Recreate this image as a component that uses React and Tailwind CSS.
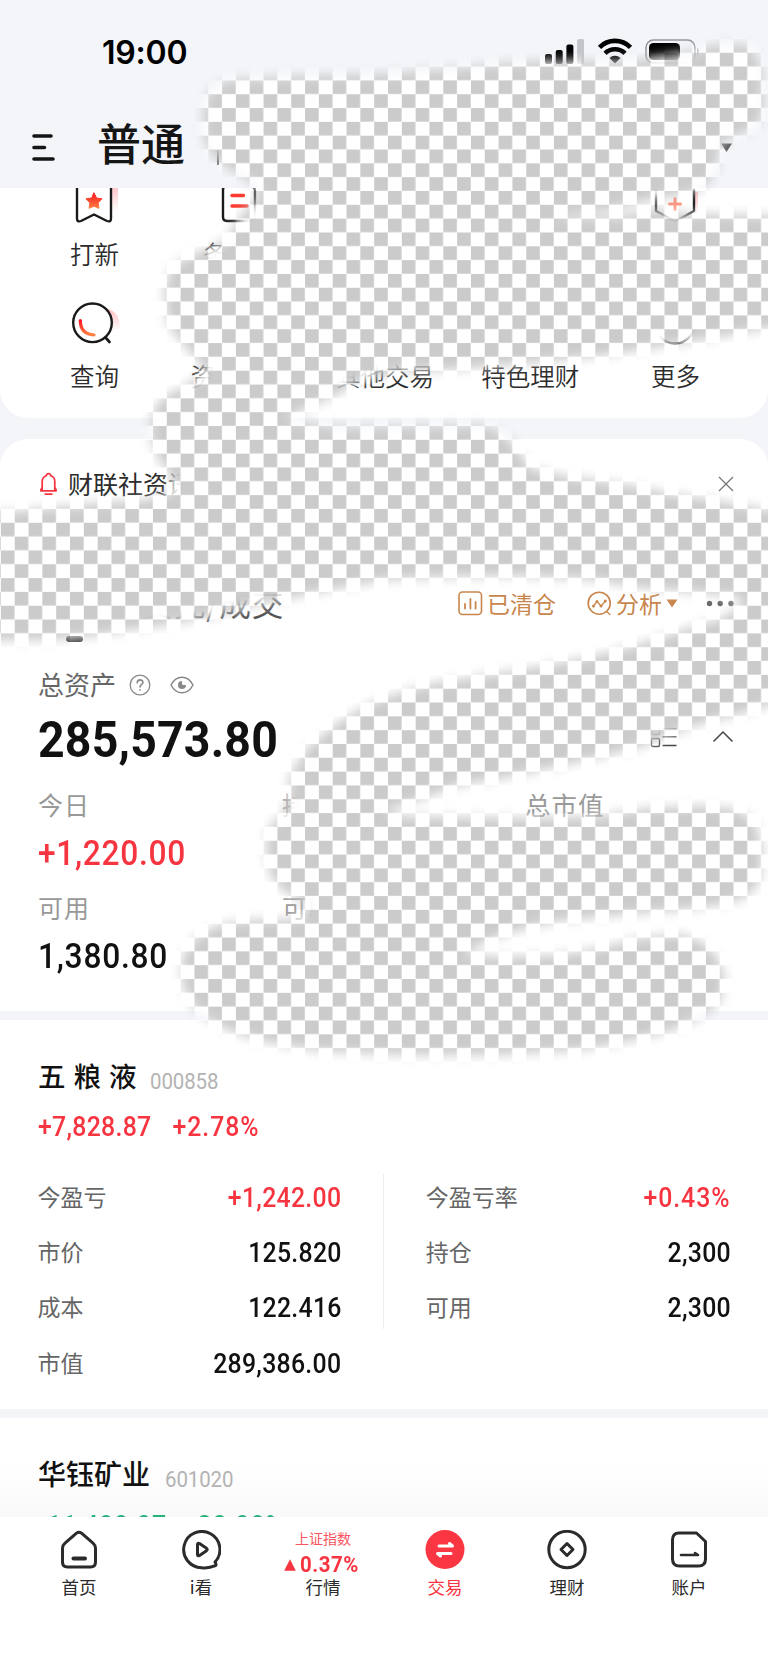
const shortcuts = [
    { label: '打新', icon: 'bookmark' },
    { label: '条件单', icon: 'doc' },
    { label: '', icon: '' },
    { label: '', icon: 'box' },
    { label: '', icon: 'hex' },
    { label: '查询', icon: 'search' },
    { label: '资产分析', icon: '' },
    { label: '其他交易', icon: '' },
    { label: '特色理财', icon: '' },
    { label: '更多', icon: 'more' },
];

const leftRows = [
    { label: '今盈亏', value: '+1,242.00', up: true },
    { label: '市价', value: '125.820' },
    { label: '成本', value: '122.416' },
    { label: '市值', value: '289,386.00' },
];

const rightRows = [
    { label: '今盈亏率', value: '+0.43%', up: true },
    { label: '持仓', value: '2,300' },
    { label: '可用', value: '2,300' },
];

const tabs = [
    { label: '首页', icon: 'home' },
    { label: 'i看', icon: 'play' },
    { label: '行情', icon: 'index' },
    { label: '交易', icon: 'trade', active: true },
    { label: '理财', icon: 'coin' },
    { label: '账户', icon: 'account' },
];

// outline of the erased area, in page pixels
const ERASED =
    'M203 130 L204 105 L210 90 L228 80 L300 76 L384 74 L450 69 L500 64 L545 61 L600 62 L640 60 L690 52 L720 44 L752 46 L762 70 L764 108 L758 126 L740 134 L720 143 L716 170 L704 188 L690 194 L655 199 L610 210 L560 216 L560 219 L620 216 L655 209 L690 214 L780 216 L780 326 L730 335 L690 342 L640 350 L600 356 L520 364 L450 370 L400 371 L360 382 L330 398 L290 416 L290 421 L340 427 L400 426 L480 425 L502 432 L516 447 L530 468 L560 475 L600 481 L640 487 L670 494 L700 498 L780 512 L780 702 L740 714 L700 724 L670 735 L640 747 L600 757 L560 766 L510 777 L460 785 L430 796 L400 806 L384 812 L400 816 L450 817 L540 818 L600 816 L650 808 L700 806 L735 809 L755 820 L763 850 L760 882 L745 898 L720 905 L680 910 L620 915 L560 921 L520 930 L490 940 L462 954 L500 957 L560 955 L600 948 L640 938 L680 934 L702 942 L718 957 L725 980 L720 1002 L700 1018 L670 1031 L630 1041 L580 1050 L500 1055 L400 1055 L320 1051 L260 1041 L220 1027 L195 1010 L182 985 L182 957 L195 938 L215 926 L250 920 L285 920 L306 916 L304 902 L282 890 L270 875 L266 850 L268 828 L285 812 L289 792 L290 775 L308 747 L335 725 L360 709 L384 698 L430 684 L500 673 L560 663 L620 650 L660 638 L690 628 L720 619 L742 606 L740 597 L690 592 L640 588 L595 580 L520 576 L450 577 L384 580 L340 588 L300 596 L250 606 L214 616 L160 626 L130 630 L100 635 L50 640 L-12 640 L-12 514 L60 507 L100 503 L145 500 L172 492 L170 474 L158 458 L150 435 L153 410 L165 396 L188 385 L206 370 L184 345 L168 325 L164 290 L172 266 L194 254 L224 242 L240 217 L260 194 L252 182 L222 165 L208 150 Z';

const CJK = "font-['Noto_Sans_CJK_SC',sans-serif]";

function ShortcutIcon({ name }) {
    return (
        <svg width="56" height="48" viewBox="0 0 56 48" fill="none" stroke="#1a1a1a" strokeWidth="2.400" strokeLinecap="round" strokeLinejoin="round">
            <defs>
                <linearGradient id="hot" x1="0" y1="0" x2="0" y2="1">
                    <stop offset="0" stopColor="#fb1420" />
                    <stop offset="1" stopColor="#ff8040" />
                </linearGradient>
                <linearGradient id="glow" x1="0" y1="0" x2="0" y2="1">
                    <stop offset="0" stopColor="#ff8a90" stopOpacity="0.55" />
                    <stop offset="1" stopColor="#ff8a90" stopOpacity="0" />
                </linearGradient>
            </defs>
            {name === 'bookmark' && (
                <g transform="translate(-1 0)">
                    <path d="M40 4h8a4 4 0 0 1 4 4v24H45z" fill="url(#glow)" stroke="none" />
                    <path d="M11 4h34v34.500q0 4-4 2.500L28 34.500 15 41q-4 1.500-4-2.500z" fill="#fff" />
                    <path d="m28 13 2.600 5 5.400.8-3.900 4 .9 5.500L28 26.300l-5 2 .9-5.500-3.900-4 5.400-.8z" fill="url(#hot)" stroke="url(#hot)" strokeWidth="1" />
                </g>
            )}
            {name === 'doc' && (
                <>
                    <path d="M11 7v30q0 4 4 4h24q4 0 4-4V11q0-4-4-5H15q-4 0-4 4z" />
                    <path d="M20 15.500h11.500M20 26h15" stroke="#fb3a30" strokeWidth="3.400" />
                </>
            )}
            {name === 'box' && <path d="m10 34 16 6 16-6" />}
            {name === 'hex' && (
                <>
                    <path d="M44 12h7v20l-6 4z" fill="url(#glow)" stroke="none" />
                    <path d="M9 10v21l19 10.500L47 31V10" fill="#fff" />
                    <path d="M28 18.500v11M22.500 24h11" stroke="#ff8a70" strokeWidth="3" />
                </>
            )}
            {name === 'search' && (
                <g transform="translate(-1 -4)">
                    <path d="M34 10q20 0 20 20l-8 4z" fill="url(#glow)" stroke="none" />
                    <circle cx="26.500" cy="24.800" r="19.300" fill="#fff" />
                    <path d="m39.500 39.500 4 4.500" strokeWidth="2.700" />
                    <path d="M14.300 22.500q0 13.500 13.700 14.500" stroke="url(#hot)" strokeWidth="3.200" />
                </g>
            )}
            {name === 'more' && <circle cx="28" cy="22.500" r="19" />}
        </svg>
    );
}

function TabIcon({ name }) {
    if (name === 'index') {
        return (
            <div className="flex h-[51px] flex-col items-center">
                <span className={`-mt-[1px] text-[14px] leading-[18px] text-[#f9555e] ${CJK}`}>上证指数</span>
                <div className="-ml-[3px] mt-[7px] flex items-center gap-[4px]">
                    <svg width="12" height="12" viewBox="0 0 12 12">
                        <path d="M6 0.300 11.800 11.700H0.200z" fill="#f73541" />
                    </svg>
                    <span className="-mr-[3px] inline-block origin-left scale-x-[0.95] font-[Roboto] text-[21.500px] font-bold leading-[22px] tracking-[0.600px] text-[#f73541]">0.37%</span>
                </div>
            </div>
        );
    }
    return (
        <svg className="mb-[11px]" width="40" height="40" viewBox="0 0 40 40" fill="none" stroke="#2b2b2b" strokeWidth="3" strokeLinecap="round" strokeLinejoin="round">
            {name === 'home' && (
                <>
                    <path d="M17.500 3.200q2.500-2 5 0l11.500 10q2.500 2.200 2.500 5V32q0 5-5 5h-23q-5 0-5-5V18.200q0-2.800 2.500-5z" />
                    <path d="M14.500 28.500h11.500" strokeWidth="4" />
                </>
            )}
            {name === 'play' && (
                <>
                    <path d="M34 32A18.100 18.100 0 1 0 20.500 37.700q7 .8 14-2 1.200-1-.5-3.700z" />
                    <path d="M16.500 14.500v10q0 2 2 .9l7-4.700q1.400-1.200 0-2.400l-7-4.700q-2-1.100-2 .9z" />
                </>
            )}
            {name === 'trade' && (
                <>
                    <circle cx="20" cy="19.500" r="19.500" fill="#f93641" stroke="none" />
                    <path d="M14 16h13.500l-3-2.500M26 23.500H12.500l3 2.500" stroke="#fff" />
                </>
            )}
            {name === 'coin' && (
                <>
                    <circle cx="20" cy="19.500" r="18.200" />
                    <path d="m20 13.500 6 6-6 6-6-6z" />
                </>
            )}
            {name === 'account' && (
                <>
                    <path d="M10 3h17.500l9 8.500V29q0 7-7 7H10.500q-7 0-7-7V10q0-7 6.500-7z" />
                    <path d="M12 25h17l-3-2" strokeWidth="2.600" />
                </>
            )}
        </svg>
    );
}

function StatusBar() {
    return (
        <div className="flex h-[104px] items-start justify-between pl-[102px] pr-[67px] pt-[33px]">
            <span className="font-[Inter] text-[32px] font-semibold leading-[40px] tracking-[-0.200px] text-black">19:00</span>
            <div className="flex items-start pt-[5px]">
                <svg width="40" height="28" viewBox="0 0 40 28">
                    <rect x="1" y="16" width="7" height="10" rx="2" />
                    <rect x="11.700" y="12" width="7" height="14" rx="2" />
                    <rect x="22.400" y="6.500" width="7" height="19.500" rx="2" />
                    <rect x="33.100" y="1" width="7" height="25" rx="2" fill="#c4c5c9" />
                </svg>
                <svg className="ml-[13px]" width="36" height="28" viewBox="0 0 36 28" fill="none" stroke="#000" strokeWidth="4.600">
                    <path d="M2.500 9.300a22 22 0 0 1 31 0" />
                    <path d="M8 15.300a14.500 14.500 0 0 1 20 0" />
                    <path d="M12.500 20a8 8 0 0 1 11 0L18 25.500z" fill="#000" stroke="none" />
                </svg>
                <svg className="ml-[11px]" width="57" height="28" viewBox="0 0 57 28">
                    <rect x="2" y="2" width="49" height="23" rx="7.500" fill="none" stroke="#95969a" strokeWidth="1.600" />
                    <rect x="5" y="5" width="31" height="17" rx="4.500" />
                    <path d="M53 9.500q4 4 0 8z" fill="#95969a" />
                </svg>
            </div>
        </div>
    );
}

function Header() {
    return (
        <div className="h-[188px] bg-[#f3f5f9]">
            <StatusBar />
            <div className="flex h-[84px] items-start pl-[31px] pr-[35px]">
                <svg className="mt-[28px]" width="26" height="32" viewBox="0 0 26 32" stroke="#151515" strokeWidth="3.600" strokeLinecap="round">
                    <path d="M3 4h17M3 15.500h10.500M3 27h19" />
                </svg>
                <span className={`ml-[40px] mt-[6px] text-[44px] font-medium leading-[64px] text-[#151515] ${CJK}`}>普通</span>
                <span className="ml-[32px] mt-[46px] h-[15px] w-[2px] bg-[#555]" />
                <svg className="ml-auto mt-[39px]" width="13" height="10" viewBox="0 0 13 10">
                    <path d="M1 0.500h11L6.500 9z" fill="#555" />
                </svg>
            </div>
        </div>
    );
}

function Shortcuts() {
    return (
        <div className="h-[230px] overflow-hidden rounded-b-[28px] bg-white pl-[22px] pr-[20px]">
            <div className="-mt-[8px] grid grid-cols-5">
                {shortcuts.map((item, i) => (
                    <div key={i} className="flex h-[122px] flex-col items-center">
                        <ShortcutIcon name={item.icon} />
                        <span className={`mt-[8px] h-[36px] text-[24.500px] font-[350] leading-[36px] text-[#2c2c2c] ${CJK}`}>{item.label}</span>
                    </div>
                ))}
            </div>
        </div>
    );
}

function NewsBar() {
    return (
        <div className="mt-[21px] flex h-[92px] items-center rounded-[28px] bg-white pb-[3px] pl-[39px] pr-[34px]">
            <svg className="mt-[1px]" width="19" height="24" viewBox="0 0 19 24" fill="none" stroke="#f73541" strokeWidth="1.700" strokeLinejoin="round">
                <path d="M1.200 18.800h16.600M3.200 18.500V9.500Q3.200 5.200 7.200 3.800q.3-2.200 2.300-2.200t2.300 2.200q4 1.400 4 5.700v9M1.500 18.500l1.700-3M17.500 18.500l-1.700-3M5.500 22.200h8" />
            </svg>
            <span className={`-mt-[2px] ml-[10px] text-[25px] leading-[36px] text-[#2c2c2c] ${CJK}`}>财联社资讯</span>
            <svg className="ml-auto" width="16" height="16" viewBox="0 0 16 16" stroke="#777" strokeWidth="1.300">
                <path d="M1 1l14 14M15 1 1 15" />
            </svg>
        </div>
    );
}

function Assets() {
    return (
        <div className="mt-[16px] flex h-[464px] flex-col rounded-t-[28px] bg-white px-[38px]">
            <div className="flex h-[94px] items-start pt-[34px]">
                <div className="ml-[28px] mt-[55px] h-[6px] w-[17px] rounded-full bg-[#2f2f2f]" />
                <span className={`ml-[58px] text-[32px] leading-[42px] tracking-[0.500px] text-[#555] ${CJK}`}>委托/成交</span>
                <div className="ml-auto mt-[5px] flex items-center text-[#c8864c]">
                    <svg width="25" height="25" viewBox="0 0 25 25" fill="none" stroke="currentColor" strokeWidth="1.600" strokeLinecap="round">
                        <rect x="1" y="1" width="22.500" height="22.500" rx="3.500" />
                        <path d="M7 13v4.500M12.400 8v9.500M17.600 11v6.500" strokeWidth="1.800" />
                    </svg>
                    <span className={`ml-[4px] text-[23px] leading-[34px] ${CJK}`}>已清仓</span>
                    <svg className="ml-[31px]" width="25" height="25" viewBox="0 0 25 25" fill="none" stroke="currentColor" strokeWidth="1.600" strokeLinecap="round">
                        <circle cx="12.200" cy="12.200" r="11" />
                        <path d="m19.500 20.500 3.500 3M6.500 15l3.500-4.500 4 4.500 4.500-5" strokeWidth="1.300" />
                        <path d="M6.500 14.900v.1M10 10.500v.1M14 14.900v.1M18.300 10v.1" strokeWidth="3" />
                    </svg>
                    <span className={`ml-[4px] text-[23px] leading-[34px] ${CJK}`}>分析</span>
                    <svg className="ml-[4px]" width="12" height="9" viewBox="0 0 12 9">
                        <path d="M0.500 0.500h11L6 8.500z" fill="currentColor" />
                    </svg>
                    <svg className="-mr-[5px] ml-[28px]" width="29" height="7" viewBox="0 0 29 7" fill="#666">
                        <circle cx="3.500" cy="3.500" r="2.700" />
                        <circle cx="14.200" cy="3.500" r="2.700" />
                        <circle cx="25" cy="3.500" r="2.700" />
                    </svg>
                </div>
            </div>
            <div className="mt-[24px] flex h-[38px] items-center">
                <span className={`text-[26px] leading-[38px] text-[#666] ${CJK}`}>总资产</span>
                <svg className="ml-[13px] mt-[1px]" width="22" height="22" viewBox="0 0 22 22" fill="none" stroke="#888" strokeWidth="1.300" strokeLinecap="round">
                    <circle cx="11" cy="11" r="9.800" />
                    <path d="M8.200 8.800q.2-2.900 2.900-2.900 2.700.1 2.800 2.500 0 1.300-1.500 2.300-1.300.9-1.300 2.300M11.100 15.700v.4" strokeWidth="1.600" />
                </svg>
                <svg className="ml-[19px] mt-[2px]" width="24" height="18" viewBox="0 0 24 18" fill="none" stroke="#888" strokeWidth="1.500">
                    <path d="M1 9q4-7.800 11-7.800T23 9q-4 7.800-11 7.800T1 9z" />
                    <path d="M12 5a4 4 0 1 0 4 4h-3a1.300 1.300 0 0 1-1-1.500z" fill="#888" stroke="none" />
                </svg>
            </div>
            <div className="flex h-[64px] items-center">
                <span className="mt-[10px] inline-block origin-left scale-x-[0.92] font-[Roboto] text-[50.500px] font-bold leading-[64px] tracking-[0.200px] text-[#111]">285,573.80</span>
                <svg className="ml-auto mt-[3px]" width="28" height="22" viewBox="0 0 28 22" fill="none" stroke="#444" strokeWidth="1.400">
                    <rect x="1.500" y="1.500" width="8" height="7" rx="1.500" />
                    <rect x="1.500" y="12.500" width="8" height="8" rx="1.500" />
                    <path d="M12.500 2.500h14M12.500 10.800h14M12.500 19.500h14" />
                </svg>
                <svg className="-mr-[4px] ml-[34px] mt-[2px]" width="22" height="13" viewBox="0 0 22 13" fill="none" stroke="#444" strokeWidth="1.500">
                    <path d="M1.500 11.500 11 2l9.500 9.500" />
                </svg>
            </div>
            <div className="mt-[13px] grid grid-cols-[244px_243px_1fr]">
                <div className="flex flex-col items-start">
                    <span className={`h-[49px] text-[25px] leading-[48px] tracking-[1px] text-[#999] ${CJK}`}>今日</span>
                    <span className="inline-block h-[54px] origin-left scale-x-[0.92] font-[Roboto] text-[34.500px] font-medium leading-[48px] tracking-[0.750px] text-[#f73541]">+1,220.00</span>
                    <span className={`h-[49px] text-[25px] leading-[48px] tracking-[1px] text-[#999] ${CJK}`}>可用</span>
                    <span className="inline-block h-[48px] origin-left scale-x-[0.92] font-[Roboto] text-[34.500px] font-medium leading-[48px] tracking-[0.800px] text-[#111]">1,380.80</span>
                </div>
                <div className="flex flex-col">
                    <span className={`h-[103px] text-[25px] leading-[48px] tracking-[1px] text-[#999] ${CJK}`}>持仓盈亏</span>
                    <span className={`h-[48px] text-[25px] leading-[48px] tracking-[1px] text-[#999] ${CJK}`}>可取</span>
                </div>
                <span className={`text-[25.500px] leading-[48px] tracking-[1px] text-[#999] ${CJK}`}>总市值</span>
            </div>
        </div>
    );
}

function Row({ label, value, up }) {
    return (
        <div className="flex h-[55.400px] items-center justify-between">
            <span className={`-ml-[0.500px] -mt-[1px] text-[23px] leading-[34px] text-[#666] ${CJK}`}>{label}</span>
            <span className={`-mr-[0.600px] mt-[3px] inline-block origin-right scale-x-[0.92] font-[Roboto] text-[27px] font-medium leading-[34px] ${value.endsWith('%') ? 'tracking-[1px]' : 'tracking-[0.300px]'} ${up ? 'text-[#f73541]' : 'text-[#111]'}`}>{value}</span>
        </div>
    );
}

function Holding() {
    return (
        <div className="mt-[9px] h-[389px] bg-white px-[38px] pt-[34px]">
            <div className="-mt-[1px] flex h-[44px] items-baseline">
                <span className={`text-[27.500px] font-medium leading-[44px] [word-spacing:1.800px] text-[#111] ${CJK}`}>五 粮 液</span>
                <span className="ml-[14px] inline-block origin-left translate-y-[2px] scale-x-[0.93] font-[Roboto] text-[22px] leading-[44px] tracking-[-0.100px] text-[#b3b3b3]">000858</span>
            </div>
            <div className="mt-[13px] flex h-[34px] origin-left scale-x-[0.92] gap-[23px] font-[Roboto] text-[27px] font-medium leading-[34px] tracking-[0.300px] text-[#f73541]">
                <span>+7,828.87</span>
                <span className="tracking-[1px]">+2.78%</span>
            </div>
            <div className="mt-[24.500px] flex">
                <div className="w-[303px]">
                    {leftRows.map((row) => (
                        <Row key={row.label} {...row} />
                    ))}
                </div>
                <div className="ml-[42px] mt-[5px] h-[155px] w-[1.500px] bg-[#eeeeef]" />
                <div className="ml-[42px] w-[304px]">
                    {rightRows.map((row) => (
                        <Row key={row.label} {...row} />
                    ))}
                </div>
            </div>
        </div>
    );
}

function NextHolding() {
    return (
        <div className="mt-[9px] h-[99px] overflow-hidden bg-gradient-to-b from-white from-45% to-[#f9f9f9] px-[38px] pt-[33px]">
            <div className="flex h-[44px] items-baseline">
                <span className={`text-[28px] font-medium leading-[44px] text-[#111] ${CJK}`}>华钰矿业</span>
                <span className="ml-[15px] inline-block origin-left translate-y-[2px] scale-x-[0.93] font-[Roboto] text-[22px] leading-[44px] tracking-[-0.100px] text-[#b3b3b3]">601020</span>
            </div>
            <div className="mt-[14px] flex h-[34px] origin-left scale-x-[0.92] gap-[23px] whitespace-nowrap font-[Roboto] text-[27px] font-medium leading-[34px] tracking-[1px] text-[#26b07a]">
                <span>-11,488.07</span>
                <span>-20.88%</span>
            </div>
        </div>
    );
}

function TabBar() {
    return (
        <div className="grid h-[148px] grid-cols-6 bg-white px-[18px] pt-[13px]">
            {tabs.map((tab) => (
                <div key={tab.label} className="flex flex-col items-center">
                    <TabIcon name={tab.icon} />
                    <span className={`-mt-[7px] text-[17.500px] leading-[26px] ${tab.active ? 'text-[#f73541]' : 'text-[#2b2b2b]'} ${CJK}`}>{tab.label}</span>
                </div>
            ))}
        </div>
    );
}

function EraseOverlay() {
    return (
        <svg className="pointer-events-none absolute left-0 top-0" width="768" height="1665" viewBox="0 0 768 1665">
            <defs>
                <pattern id="checker" x="0.9" y="25.1" width="27.65" height="27.65" patternUnits="userSpaceOnUse">
                    <rect width="27.65" height="27.65" fill="#fff" />
                    <rect width="13.6" height="13.6" fill="#cbcbcb" />
                    <rect x="13.825" y="13.825" width="13.6" height="13.6" fill="#cbcbcb" />
                </pattern>
                <filter id="soft" x="-40" y="0" width="860" height="1120" filterUnits="userSpaceOnUse">
                    <feGaussianBlur stdDeviation="6" />
                </filter>
                <mask id="brush" x="0" y="0" width="768" height="1665" maskUnits="userSpaceOnUse">
                    <path d={ERASED} fill="#fff" filter="url(#soft)" />
                </mask>
            </defs>
            <rect width="768" height="1100" fill="url(#checker)" mask="url(#brush)" />
        </svg>
    );
}

function App() {
    return (
        <div className="relative h-[1665px] w-[768px] overflow-hidden bg-[#f3f5f9]">
            <Header />
            <Shortcuts />
            <NewsBar />
            <Assets />
            <Holding />
            <NextHolding />
            <TabBar />
            <EraseOverlay />
        </div>
    );
}

export default App;
